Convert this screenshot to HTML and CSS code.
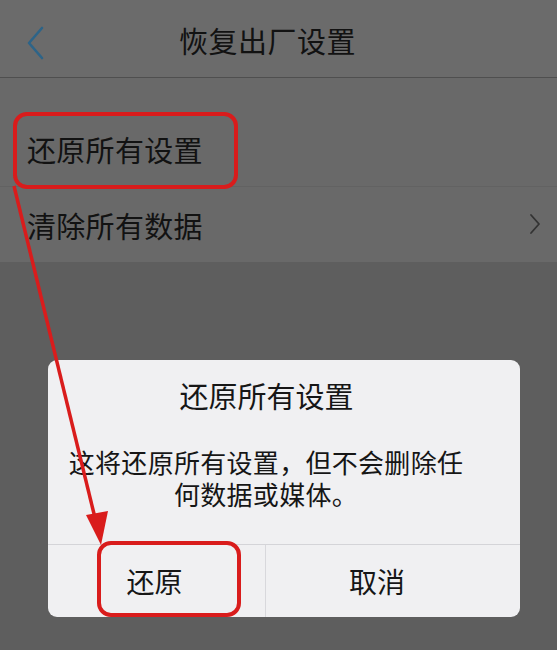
FILE: index.html
```html
<!DOCTYPE html>
<html lang="zh-CN">
<head>
<meta charset="utf-8">
<title>恢复出厂设置</title>
<link rel="stylesheet" href="styles.css">
</head>
<body>
<div class="screen">
  <header class="topbar">
    <svg class="back" width="20" height="34" viewBox="0 0 20 34"><polyline points="16,2 3,17 16,32" fill="none" stroke="#2d6488" stroke-width="2.6" stroke-linecap="round" stroke-linejoin="round"/></svg>
    <h1 class="title">恢复出厂设置</h1>
  </header>
  <section class="list">
    <div class="row row-first"><span>还原所有设置</span></div>
    <div class="row"><span>清除所有数据</span>
      <svg class="chev" width="12" height="22" viewBox="0 0 12 22"><polyline points="2,2 10,11 2,20" fill="none" stroke="#333" stroke-width="1.8" stroke-linecap="round" stroke-linejoin="round"/></svg>
    </div>
  </section>
  <div class="rest">
    <div class="dialog">
      <div class="dlg-title">还原所有设置</div>
      <div class="dlg-msg">
        <div class="msg-line">这将还原所有设置，但不会删除任</div>
        <div class="msg-line">何数据或媒体。</div>
      </div>
      <div class="dlg-btns">
        <div class="btn btn-left">还原</div>
        <div class="btn btn-right">取消</div>
      </div>
    </div>
  </div>
  <svg class="annot" width="557" height="650" viewBox="0 0 557 650">
    <rect x="15" y="114" width="221" height="73" rx="12" fill="none" stroke="#d91c1c" stroke-width="4"/>
    <rect x="99" y="543" width="140" height="72" rx="12" fill="none" stroke="#d91c1c" stroke-width="4"/>
    <line x1="14" y1="186" x2="96" y2="522" stroke="#d91c1c" stroke-width="3.5"/>
    <polygon points="86,515 108,511 101,545" fill="#d91c1c"/>
  </svg>
</div>
</body>
</html>
```
FILE: styles.css
```css
html, body {
  margin: 0;
  padding: 0;
}
body {
  width: 557px;
  height: 650px;
  overflow: hidden;
  font-family: "Noto Sans CJK SC", "Noto Sans", sans-serif;
}
.screen {
  position: relative;
  width: 557px;
  height: 650px;
  display: flex;
  flex-direction: column;
  background: #5e5e5e;
}
.topbar {
  height: 77px;
  background: #6b6b6b;
  border-bottom: 1px solid #4f4f4f;
  display: flex;
  align-items: center;
  justify-content: center;
  position: relative;
}
.back {
  position: absolute;
  left: 26px;
  top: 26px;
}
.title {
  margin: 0;
  font-size: 29px;
  font-weight: 400;
  color: #121212;
  padding-right: 22px;
  padding-top: 3px;
  letter-spacing: 0.5px;
}
.list {
  background: #696969;
  padding-top: 33px;
  height: 151px;
  box-sizing: content-box;
}
.row {
  height: 75px;
  display: flex;
  align-items: center;
  justify-content: space-between;
  padding: 0 16px 0 27px;
  font-size: 29px;
  color: #121212;
}
.row span {
  letter-spacing: 0.3px;
}
.row-first {
  border-bottom: 1px solid #626262;
}
.chev {
  margin-top: -2px;
}
.rest {
  flex: 1;
  display: flex;
  justify-content: flex-start;
  padding-top: 98px;
  padding-left: 48px;
  background: #5e5e5e;
}
.dialog {
  width: 472px;
  height: 257px;
  background: #f0f0f2;
  border-radius: 9px;
  display: flex;
  flex-direction: column;
  align-items: center;
  overflow: hidden;
}
.dlg-title {
  font-size: 29px;
  color: #161616;
  margin-top: 15px;
  line-height: 40px;
  padding-right: 35px;
}
.dlg-msg {
  font-size: 26px;
  color: #161616;
  text-align: center;
  margin-top: 31px;
  padding-right: 36px;
  display: flex;
  flex-direction: column;
  align-items: center;
}
.msg-line {
  line-height: 32px;
  letter-spacing: 0.3px;
}
.dlg-btns {
  margin-top: auto;
  width: 100%;
  height: 72px;
  border-top: 1px solid #d4d4d8;
  display: flex;
}
.btn {
  flex: 1;
  display: flex;
  align-items: center;
  justify-content: center;
  font-size: 28px;
  color: #161616;
}
.btn-left {
  flex: 0 0 217px;
  padding-right: 4px;
  box-sizing: border-box;
}
.btn-right {
  border-left: 1px solid #d8d8dc;
  padding-right: 32px;
}
.annot {
  position: absolute;
  left: 0;
  top: 0;
  pointer-events: none;
}
```
